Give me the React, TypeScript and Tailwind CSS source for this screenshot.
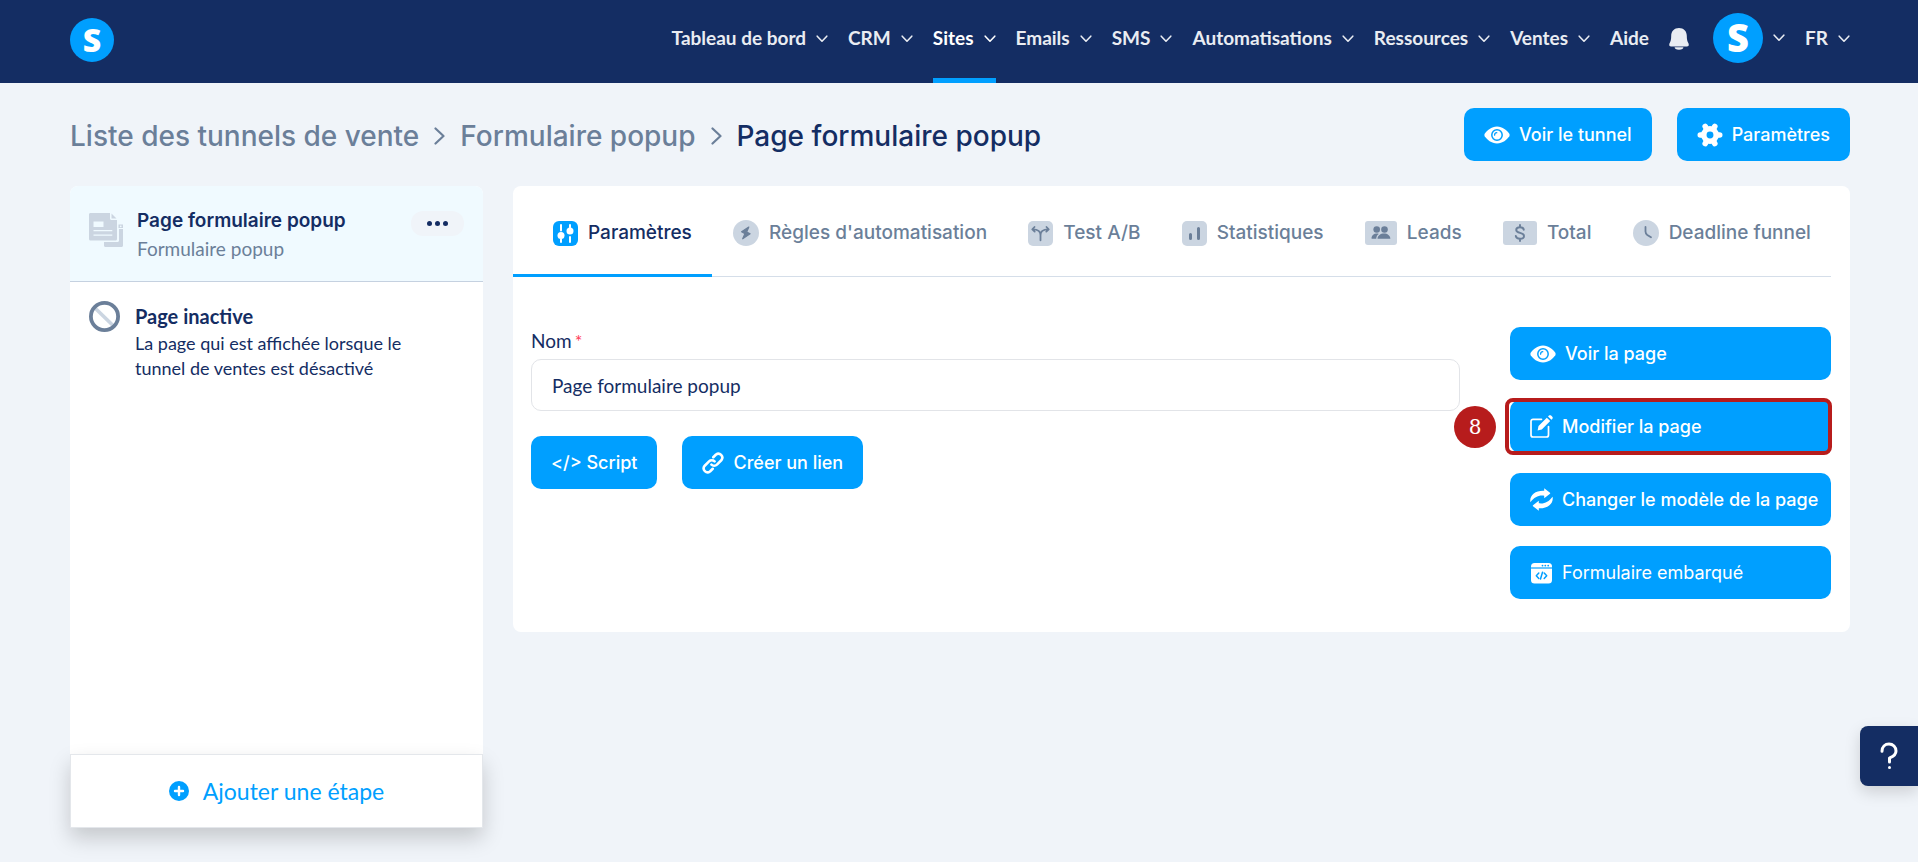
import type { ReactNode } from "react";
import clsx from "clsx";

const navItems = [
  { label: "Tableau de bord" },
  { label: "CRM" },
  { label: "Sites", active: true },
  { label: "Emails" },
  { label: "SMS" },
  { label: "Automatisations" },
  { label: "Ressources" },
  { label: "Ventes" },
];

const tabs = [
  { label: "Paramètres", icon: <SlidersIcon />, active: true },
  { label: "Règles d'automatisation", icon: <BoltIcon /> },
  { label: "Test A/B", icon: <SplitIcon /> },
  { label: "Statistiques", icon: <StatsIcon /> },
  { label: "Leads", icon: <LeadsIcon /> },
  { label: "Total", icon: <MoneyIcon /> },
  { label: "Deadline funnel", icon: <ClockIcon /> },
];

function ChevronDown() {
  return (
    <svg width="12" height="8" viewBox="0 0 12 8" fill="none" stroke="currentColor" strokeWidth="1.6" strokeLinecap="round" strokeLinejoin="round">
      <path d="M1.2 1.2 6 6.2l4.8-5" />
    </svg>
  );
}

function ChevronRight() {
  return (
    <svg width="11" height="18" viewBox="0 0 11 18" fill="none" stroke="#6b7f99" strokeWidth="2.2" strokeLinecap="round" strokeLinejoin="round">
      <path d="m1.5 1.5 8 7.5-8 7.5" />
    </svg>
  );
}

function BellIcon() {
  return (
    <svg width="20" height="22" viewBox="0 0 20 22" fill="currentColor">
      <path d="M10 0c4.700 0 7.800 3.300 7.800 7.800 0 4 .6 5.800 1.500 7.300.8 1.400.7 3.400-1.300 3.400H2c-2 0-2.100-2-1.300-3.400.9-1.500 1.500-3.300 1.500-7.300C2.200 3.300 5.300 0 10 0Z" />
      <path d="M5.600 19.300h8.800c0 1.500-1.400 2.500-4.400 2.500s-4.400-1-4.400-2.500Z" />
    </svg>
  );
}

function EyeIcon() {
  return (
    <svg width="26" height="18" viewBox="0 0 26 18">
      <path fill="#fff" d="M13 .5c5.600 0 10 4 12.300 7.300.5.800.5 1.600 0 2.400C23 13.500 18.600 17.500 13 17.500S3 13.500.7 10.200c-.5-.8-.5-1.600 0-2.400C3 4.500 7.400.5 13 .5Z" />
      <circle cx="13" cy="9" r="5.200" fill="none" stroke="#009fff" strokeWidth="1.500" />
      <path d="M10.600 9.200a2.400 2.400 0 0 1 2.200-2.500" fill="none" stroke="#009fff" strokeWidth="1.200" strokeLinecap="round" />
    </svg>
  );
}

function GearIcon() {
  return (
    <svg width="26" height="24" viewBox="0 0 26 24">
      <circle cx="13" cy="12" r="6.200" fill="none" stroke="#fff" strokeWidth="5.500" />
      <g stroke="#fff" strokeWidth="5.600" strokeLinecap="round">
        <path d="M3.300 12h2M20.700 12h2M8.200 3.400l1 1.800M16.800 18.800l1 1.800M17.800 3.400l-1 1.800M9.200 18.800l-1 1.800" />
      </g>
    </svg>
  );
}

function PagesIcon() {
  return (
    <svg width="34" height="34" viewBox="0 0 34 34" className="shrink-0">
      <path fill="#cbd5e1" d="M30 16h4v16.500c0 .9-.6 1.500-1.500 1.500h-16c-.9 0-1.500-.6-1.500-1.500V29h13.500c.9 0 1.500-.6 1.500-1.500V16Z" />
      <path fill="#cbd5e1" d="M1.500 0H21v5.500c0 .9.600 1.500 1.500 1.500H28v19c0 .9-.6 1.500-1.500 1.500h-25C.6 27.500 0 26.900 0 26V1.500C0 .6.600 0 1.500 0Z" />
      <path fill="#cbd5e1" d="M22.500.5 27.500 5.600h-5Z" />
      <path fill="#f0faff" d="M4.500 8.500h10v5.500h-10zM4.500 17h18.800v1.200H4.500zM4.500 21.500h18.800v1.200H4.500z" />
      <path fill="#cbd5e1" d="M29.500 11.500h4.500v3.500h-4.500z" />
      <circle cx="31.700" cy="13.300" r=".9" fill="#f0faff" />
    </svg>
  );
}

function ForbiddenIcon() {
  return (
    <svg width="31" height="31" viewBox="0 0 31 31" className="shrink-0">
      <path d="m6.500 7.500 17.500 17" stroke="#cbd5e1" strokeWidth="3.600" />
      <circle cx="15.500" cy="15.500" r="13.600" fill="none" stroke="#6b7f99" strokeWidth="3.800" />
    </svg>
  );
}

function SlidersIcon() {
  return (
    <svg width="25" height="25" viewBox="0 0 25 25">
      <rect width="25" height="25" rx="6" fill="#009fff" />
      <g stroke="#fff" strokeWidth="2" strokeLinecap="round">
        <path d="M8 4v5.500M8 18.500V21M17 4v2.500M17 16v5" />
      </g>
      <circle cx="8" cy="14.500" r="3.500" fill="#fff" />
      <circle cx="17" cy="10" r="3.500" fill="#fff" />
    </svg>
  );
}

function BoltIcon() {
  return (
    <svg width="26" height="26" viewBox="0 0 26 26">
      <circle cx="13" cy="13" r="13" fill="#cbd5e1" />
      <path d="M15.800 7 8.600 11.800l3.400 1.800-2.300 5.200 7.400-5-3.400-1.900L15.800 7Z" fill="#6b7f99" stroke="#6b7f99" strokeWidth="1.200" strokeLinejoin="round" />
    </svg>
  );
}

function SplitIcon() {
  return (
    <svg width="25" height="25" viewBox="0 0 25 25">
      <rect width="25" height="25" rx="5" fill="#cbd5e1" />
      <g fill="none" stroke="#6b7f99" strokeWidth="1.800" strokeLinecap="round" strokeLinejoin="round">
        <path d="M12.500 19.300V14c0-3.500-2.500-5.700-7.700-5.700M12.500 14c0-3.500 2.500-5.700 7.700-5.700M6.500 6 4.300 8.300l2.400 2.300M18.500 6l2.200 2.300-2.400 2.300" />
      </g>
    </svg>
  );
}

function StatsIcon() {
  return (
    <svg width="25" height="25" viewBox="0 0 25 25">
      <rect width="25" height="25" rx="5" fill="#cbd5e1" />
      <path d="M8.500 13.500v4M16.500 7.500v10" stroke="#6b7f99" strokeWidth="3" strokeLinecap="round" />
    </svg>
  );
}

function LeadsIcon() {
  return (
    <svg width="32" height="24" viewBox="0 0 32 24">
      <rect width="32" height="24" rx="3" fill="#cbd5e1" />
      <g fill="#6b7f99">
        <circle cx="11.700" cy="8.500" r="3.300" />
        <circle cx="19.500" cy="8.500" r="3.300" />
        <path d="M6.500 16.700c.4-2.400 2.400-4.200 5.200-4.200.8 0 1.500.1 2.100.4-1.500 1-2.400 2.300-2.600 4.800H7.300c-.6 0-.9-.4-.8-1ZM12.500 17.700c.2-3.200 3-5.200 6.500-5.200s6.200 2 6.400 5.200H12.500Z" />
      </g>
    </svg>
  );
}

function MoneyIcon() {
  return (
    <svg width="34" height="24" viewBox="0 0 34 24">
      <rect width="34" height="24" rx="3" fill="#cbd5e1" />
      <path d="M20.800 8.800C20.500 7.200 19 6.300 17 6.300c-2.200 0-3.800 1-3.800 2.700 0 4 7.800 1.800 7.800 5.900 0 1.800-1.700 2.800-4 2.800s-3.900-1-4.200-2.700M17 4v2.300M17 17.700V20" fill="none" stroke="#6b7f99" strokeWidth="1.900" strokeLinecap="round" />
    </svg>
  );
}

function ClockIcon() {
  return (
    <svg width="26" height="26" viewBox="0 0 26 26">
      <circle cx="13" cy="13" r="13" fill="#cbd5e1" />
      <path d="M12.500 7v4.500c0 1.600.6 2.600 1.800 3.500l3.700 2.300" fill="none" stroke="#6b7f99" strokeWidth="1.800" strokeLinecap="round" />
    </svg>
  );
}

function LinkIcon() {
  return (
    <svg width="22" height="22" viewBox="0 0 24 24" fill="none" stroke="#fff" strokeWidth="2.800" strokeLinecap="round" strokeLinejoin="round">
      <path d="M10.300 13.700a4.300 4.300 0 0 0 6 0l5-5a4.300 4.300 0 0 0-6-6l-3 3" />
      <path d="M13.700 10.300a4.300 4.300 0 0 0-6 0l-5 5a4.300 4.300 0 0 0 6 6l3-3" />
    </svg>
  );
}

function EditIcon() {
  return (
    <svg width="23" height="23" viewBox="0 0 23 23" fill="none">
      <path d="M11.500 4.300H3a2 2 0 0 0-2 2V20a2 2 0 0 0 2 2h13.500a2 2 0 0 0 2-2v-8.500" stroke="#fff" strokeWidth="1.700" strokeLinecap="round" />
      <path d="M16.800 2.700 20.200 6l-8.400 8.400-4.200 1 .9-4.400 8.300-8.300Z" fill="#fff" />
      <path d="m18 1.500 1-.9c.6-.6 1.500-.6 2.100 0l1.200 1.200c.6.600.6 1.500 0 2.100l-.9.900L18 1.500Z" fill="#fff" />
    </svg>
  );
}

function SwapIcon() {
  return (
    <svg width="23" height="23" viewBox="0 0 23 23" fill="#fff">
      <path d="M14.200.3 20 4.800c.3.300.3.700 0 .9l-5.800 4.500V7.700C8.500 7 4.500 9 .4 14.300-.8 7.500 5.300 2.300 14.200 2.800V.3Z" />
      <path d="M8.800 22.700 3 18.200c-.3-.3-.3-.7 0-.9l5.800-4.500v2.500c5.700.7 9.700-1.300 13.800-6.600 1.200 6.800-4.900 12-13.800 11.500v2.500Z" />
    </svg>
  );
}

function EmbedIcon() {
  return (
    <svg width="23" height="22" viewBox="0 0 23 22">
      <rect x="1" y="1" width="21" height="20.500" rx="3.500" fill="#fff" />
      <path d="M1 6h21" stroke="#009fff" strokeWidth="1.200" />
      <g fill="#009fff">
        <circle cx="12.500" cy="3.600" r=".9" />
        <circle cx="15.300" cy="3.600" r=".9" />
        <circle cx="18.200" cy="3.600" r=".9" />
      </g>
      <path d="M8.800 11 6.300 13.700l2.500 2.700M14.200 11l2.500 2.700-2.500 2.700M12.500 10.300l-2 6.700" fill="none" stroke="#009fff" strokeWidth="1.500" strokeLinecap="round" strokeLinejoin="round" />
    </svg>
  );
}

function PlusIcon() {
  return (
    <svg width="20" height="20" viewBox="0 0 20 20">
      <circle cx="10" cy="10" r="10" fill="#009fff" />
      <path d="M10 6v8M6 10h8" stroke="#fff" strokeWidth="2.400" strokeLinecap="round" />
    </svg>
  );
}

function HelpIcon() {
  return (
    <svg width="18" height="28" viewBox="0 0 18 28" fill="none" stroke="#fff" strokeWidth="3" strokeLinecap="round" strokeLinejoin="round">
      <path d="M2 9.200C2 5 5 2 9 2s7 3 7 7c0 4.600-3.800 5.800-6.500 7v4" />
      <path d="M9.500 25.500v.1" />
    </svg>
  );
}

function PrimaryButton({ icon, light, children }: { icon?: ReactNode; light?: boolean; children: ReactNode }) {
  return (
    <button
      type="button"
      className={clsx(
        "flex h-[53px] items-center gap-[9px] rounded-[10px] bg-[#009fff] px-5 font-['Inter',sans-serif] text-lg whitespace-nowrap text-white [&>svg]:shrink-0",
        light ? "font-normal" : "font-medium"
      )}
    >
      {icon}
      {children}
    </button>
  );
}

function Header() {
  return (
    <header className="flex h-[83px] items-center justify-between bg-[#142d63] pr-[68px] pl-[70px] font-bold text-[#e9ecf2]">
      <a href="#" aria-label="Accueil" className="mb-1 flex size-11 items-center justify-center rounded-full bg-[#009fff] font-['Open_Sans',sans-serif] text-[32px] font-extrabold text-white">
        S
      </a>
      <nav className="flex h-full items-center gap-5 text-[19px]">
        {navItems.map((item) => (
          <button
            key={item.label}
            type="button"
            className={clsx("flex h-full items-center gap-[10px] border-y-5 border-transparent pb-[6px]", item.active && "border-b-[#009fff] text-white")}
          >
            {item.label}
            <ChevronDown />
          </button>
        ))}
        <a href="#" className="pb-[6px]">Aide</a>
        <button type="button" aria-label="Notifications" className="pb-[6px]"><BellIcon /></button>
        <button type="button" aria-label="Compte" className="flex items-center gap-[10px] pb-2 pl-1">
          <span className="flex size-[50px] items-center justify-center rounded-full bg-[#009fff] font-['Open_Sans',sans-serif] text-[38px] font-extrabold text-white">S</span>
          <ChevronDown />
        </button>
        <button type="button" className="flex items-center gap-[10px] pb-[6px]">
          FR
          <ChevronDown />
        </button>
      </nav>
    </header>
  );
}

function Sidebar() {
  return (
    <aside className="flex min-h-[calc(100vh-220px)] w-[413px] shrink-0 flex-col rounded-t-lg bg-white">
      <div className="flex h-24 items-start rounded-t-lg border-b border-[#c5d1e0] bg-[#f0faff] pt-[21px] pr-[19px] pl-[19px]">
        <div className="pt-[6px]"><PagesIcon /></div>
        <div className="flex-1 pl-[14px] text-[19px] leading-7">
          <p className="font-['Inter',sans-serif] font-semibold">Page formulaire popup</p>
          <p className="text-[#6b7f99]">Formulaire popup</p>
        </div>
        <button type="button" aria-label="Options" className="mt-1 flex h-[25px] w-[53px] items-center justify-center gap-[3px] rounded-xl bg-[#f0f4f9]">
          <span className="size-[5px] rounded-full bg-[#142d63]" />
          <span className="size-[5px] rounded-full bg-[#142d63]" />
          <span className="size-[5px] rounded-full bg-[#142d63]" />
        </button>
      </div>
      <div className="flex items-start gap-[15px] pt-[19px] pr-[50px] pl-[19px]">
        <ForbiddenIcon />
        <div className="pt-[3px] text-lg leading-[25px]">
          <p className="pb-[2px] text-xl leading-[25px] font-bold">Page inactive</p>
          <p>La page qui est affichée lorsque le tunnel de ventes est désactivé</p>
        </div>
      </div>
      <button type="button" className="mt-auto flex h-[74px] w-full items-center justify-center gap-[14px] border border-[#e4e7eb] bg-white text-[23px] text-[#009fff] shadow-[0_10px_20px_rgba(0,0,0,0.18)]">
        <PlusIcon />
        Ajouter une étape
      </button>
    </aside>
  );
}

function Tabs() {
  return (
    <div role="tablist" className="mr-[19px] flex h-[91px] justify-between border-b border-[#d5dee9]">
      {tabs.map((tab) => (
        <button
          key={tab.label}
          type="button"
          role="tab"
          aria-selected={!!tab.active}
          className={clsx(
            "-mb-px flex items-center gap-[10px] border-b-3 pt-[6px] pr-5 font-['Inter',sans-serif] text-[19px] font-medium whitespace-nowrap",
            tab.active ? "border-[#009fff] pl-10" : "border-transparent pl-5 text-[#6b7f99]"
          )}
        >
          {tab.icon}
          {tab.label}
        </button>
      ))}
    </div>
  );
}

export default function App() {
  return (
    <div className="min-h-screen bg-[#f0f4f9] font-['Lato',sans-serif] text-[#142d63]">
      <Header />
      <main className="pr-[68px] pb-[34px] pl-[70px]">
        <div className="flex items-center justify-between py-[25px]">
          <nav aria-label="Fil d'Ariane" className="flex items-center gap-[15px] pt-[2px] font-['Inter',sans-serif] text-[28px] font-medium">
            <a href="#" className="text-[#6b7f99]">Liste des tunnels de vente</a>
            <ChevronRight />
            <a href="#" className="text-[#6b7f99]">Formulaire popup</a>
            <ChevronRight />
            <h1>Page formulaire popup</h1>
          </nav>
          <div className="flex gap-[25px]">
            <PrimaryButton icon={<EyeIcon />}>Voir le tunnel</PrimaryButton>
            <PrimaryButton icon={<GearIcon />}>Paramètres</PrimaryButton>
          </div>
        </div>

        <div className="flex items-start gap-[30px]">
          <Sidebar />
          <section className="min-w-0 flex-1 rounded-lg bg-white pb-[33px]">
            <Tabs />
            <div className="flex gap-[50px] pt-[50px] pr-[19px] pl-[18px]">
              <div className="min-w-0 flex-1">
                <label htmlFor="page-name" className="block pb-1 text-[19px] leading-7">
                  Nom<span className="pl-[3px] text-lg text-[#ff3b57]">*</span>
                </label>
                <input id="page-name" type="text" defaultValue="Page formulaire popup" className="h-[52px] w-full rounded-[10px] border border-[#e2e4e8] px-5 text-[19px]" />
                <div className="flex gap-[25px] pt-[25px]">
                  <PrimaryButton>&lt;/&gt; Script</PrimaryButton>
                  <PrimaryButton icon={<LinkIcon />}>Créer un lien</PrimaryButton>
                </div>
              </div>
              <div className="flex w-[321px] shrink-0 flex-col gap-5">
                <PrimaryButton icon={<EyeIcon />}>Voir la page</PrimaryButton>
                <div className="relative flex flex-col">
                  <PrimaryButton icon={<EditIcon />}>Modifier la page</PrimaryButton>
                  {/* Step marker */}
                  <span className="pointer-events-none absolute -inset-y-[2px] -right-px -left-[5px] rounded-lg border-4 border-[#b71c1c]" />
                  <span className="absolute top-[6px] -left-14 flex size-[42px] items-center justify-center rounded-full bg-[#b71c1c] font-['DejaVu_Serif',serif] text-xl text-white">8</span>
                </div>
                <PrimaryButton icon={<SwapIcon />}>Changer le modèle de la page</PrimaryButton>
                <PrimaryButton icon={<EmbedIcon />} light>Formulaire embarqué</PrimaryButton>
              </div>
            </div>
          </section>
        </div>
      </main>

      <button type="button" aria-label="Aide en ligne" className="fixed right-0 bottom-[76px] flex h-[60px] w-[58px] items-center justify-center rounded-l-lg bg-[#142d63] shadow-[0_6px_16px_rgba(0,0,0,0.15)]">
        <HelpIcon />
      </button>
    </div>
  );
}
